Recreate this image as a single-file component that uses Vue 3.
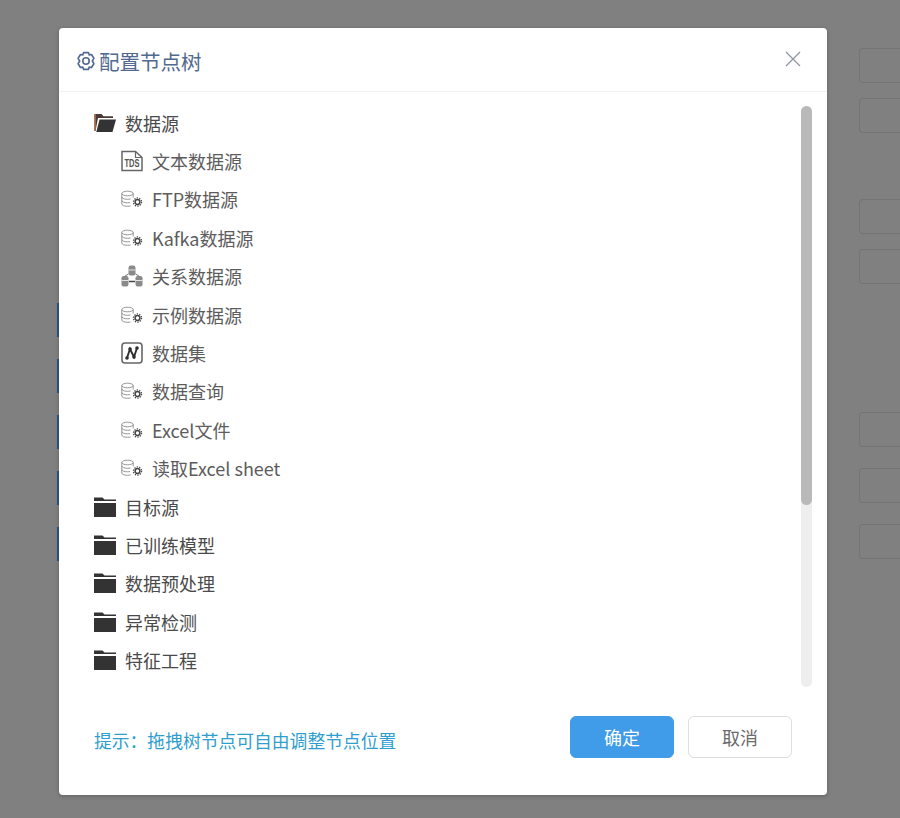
<template>
  <div class="page">
    <!-- page behind the mask -->
    <div class="behind">
      <div class="left-marks">
        <span v-for="n in 5" :key="n" class="mark"></span>
      </div>
      <div class="right-boxes">
        <div class="box-group first">
          <span class="box"></span>
          <span class="box"></span>
        </div>
        <div class="box-group second">
          <span class="box"></span>
          <span class="box"></span>
        </div>
        <div class="box-group third">
          <span class="box"></span>
          <span class="box"></span>
          <span class="box"></span>
        </div>
      </div>
    </div>

    <div class="mask">
      <div class="dialog">
        <div class="dialog-header">
          <div class="title">
            <svg class="gear" viewBox="0 0 20 20" fill="none" stroke="#51698f" stroke-width="1.6" stroke-linejoin="round">
              <path d="M7.600 1.600h4.800l.8 2.300 2.300-.4 2.400 3.800-1.600 2.700 1.600 2.700-2.400 3.800-2.300-.4-.8 2.300H7.600l-.8-2.300-2.300.4-2.400-3.800 1.600-2.700-1.600-2.700 2.400-3.800 2.300.4z" />
              <circle cx="10" cy="10" r="3.200" />
            </svg>
            <span>配置节点树</span>
          </div>
          <svg class="close" viewBox="0 0 16 16" fill="none" stroke="#8f96a0" stroke-width="1.3">
            <path d="M1 1l14 14M15 1L1 15" />
          </svg>
        </div>

        <div class="dialog-body">
          <div class="tree">
            <div
              v-for="node in nodes"
              :key="node.label"
              class="row"
              :class="{ child: node.child }"
            >
              <svg v-if="node.icon === 'open'" class="icon" viewBox="0 0 22 20">
                <path d="M0.500 1h7l2 2.200H19v1.800H4L1.500 18H0.500z" fill="#4a3a36" />
                <path d="M0.500 1h1.500v16l-1.500 1z" fill="#a0623c" />
                <path d="M5.500 6.500H22L18.500 19H2.300z" fill="#333" />
              </svg>
              <svg v-else-if="node.icon === 'folder'" class="icon" viewBox="0 0 22 20">
                <path d="M0 0.500h8.500l2 2H22v1.600H0z" fill="#333" />
                <path d="M0 6h22v14H0z" fill="#333" />
              </svg>
              <svg v-else-if="node.icon === 'doc'" class="icon" viewBox="0 0 22 22" fill="none" stroke="#666">
                <path d="M1 1.500h13.500l6.500 6v13H1z" stroke-width="1.500" />
                <path d="M14.500 1.500V7.500h6.500" stroke-width="1.200" />
                <text x="3.500" y="16.800" textLength="15" lengthAdjust="spacingAndGlyphs" class="doc-text">TDS</text>
              </svg>
              <svg v-else-if="node.icon === 'db'" class="icon" viewBox="0 0 22 20" fill="none">
                <g stroke="#8a8a8a" stroke-width="0.900">
                  <ellipse cx="6.500" cy="4.500" rx="5.700" ry="2.300" />
                  <path d="M0.800 4.500v10.500c0 1.300 2.500 2.300 5.700 2.300 1.200 0 2.200-.1 3-.4M12.200 4.500v4M0.800 8c0 1.300 2.500 2.300 5.700 2.300 1 0 2-.1 3-.4M0.800 11.500c0 1.300 2.500 2.300 5.700 2.300 1 0 1.800-.1 2.500-.3" />
                </g>
                <circle cx="16.500" cy="13" r="2.400" stroke="#444" stroke-width="1.500" />
                <circle cx="16.500" cy="13" r="4.100" stroke="#444" stroke-width="1.200" stroke-dasharray="1.300 1.270" />
              </svg>
              <svg v-else-if="node.icon === 'relation'" class="icon" viewBox="0 0 22 22" fill="none">
                <rect x="7.500" y="0.500" width="7" height="10" rx="2.200" fill="#8a8a8a" />
                <rect x="0.500" y="11" width="7" height="10.500" rx="2.200" fill="#8a8a8a" />
                <rect x="14.500" y="11" width="7" height="10.500" rx="2.200" fill="#8a8a8a" />
                <path d="M7.500 5h7M0.500 15.500h7M14.500 15.500h7" stroke="#e4e4e4" stroke-width="1.200" />
                <path d="M7.500 9L4 11M14.500 9L18 11" stroke="#777" stroke-width="1" />
                <path d="M8 16.500h6" stroke="#444" stroke-width="1.500" />
              </svg>
              <svg v-else class="icon" viewBox="0 0 22 22" fill="none">
                <rect x="1" y="1" width="20" height="20" rx="3" stroke="#666" stroke-width="1.600" />
                <path d="M6 16l3-9 4 8 3-9" stroke="#2e2e2e" stroke-width="1.900" />
                <circle cx="6" cy="16" r="1.800" fill="#2e2e2e" />
                <circle cx="9" cy="7" r="1.800" fill="#2e2e2e" />
                <circle cx="13" cy="15" r="1.800" fill="#2e2e2e" />
                <circle cx="16" cy="6" r="1.800" fill="#2e2e2e" />
              </svg>
              <span class="label">{{ node.label }}</span>
            </div>
          </div>
          <div class="scroll-track">
            <div class="scroll-thumb"></div>
          </div>
        </div>

        <div class="dialog-footer">
          <span class="hint">提示：拖拽树节点可自由调整节点位置</span>
          <div class="buttons">
            <button type="button" class="btn primary">确定</button>
            <button type="button" class="btn">取消</button>
          </div>
        </div>
      </div>
    </div>
  </div>
</template>

<script setup>
const nodes = [
  { label: "数据源", icon: "open" },
  { label: "文本数据源", icon: "doc", child: true },
  { label: "FTP数据源", icon: "db", child: true },
  { label: "Kafka数据源", icon: "db", child: true },
  { label: "关系数据源", icon: "relation", child: true },
  { label: "示例数据源", icon: "db", child: true },
  { label: "数据集", icon: "dataset", child: true },
  { label: "数据查询", icon: "db", child: true },
  { label: "Excel文件", icon: "db", child: true },
  { label: "读取Excel sheet", icon: "db", child: true },
  { label: "目标源", icon: "folder" },
  { label: "已训练模型", icon: "folder" },
  { label: "数据预处理", icon: "folder" },
  { label: "异常检测", icon: "folder" },
  { label: "特征工程", icon: "folder" },
];
</script>

<style scoped>
.page {
  position: relative;
  width: 900px;
  height: 818px;
  overflow: hidden;
  background: #808080;
  font-family: "Noto Sans CJK SC", "Open Sans", sans-serif;
}

.behind {
  display: flex;
  justify-content: space-between;
  height: 100%;
  padding-left: 57px;
  box-sizing: border-box;
}

.left-marks {
  display: flex;
  flex-direction: column;
  gap: 22px;
  padding-top: 303px;
}

.mark {
  display: block;
  width: 2px;
  height: 34px;
  background: #27598a;
}

.right-boxes {
  display: flex;
  flex-direction: column;
  width: 41px;
  padding-top: 48px;
}

.box-group {
  display: flex;
  flex-direction: column;
  gap: 15px;
}

.second {
  margin-top: 66px;
}

.third {
  margin-top: 128px;
  gap: 21px;
}

.box {
  display: block;
  box-sizing: border-box;
  height: 35px;
  border: 1px solid #747474;
  border-right: none;
  border-radius: 4px 0 0 4px;
}

.mask {
  position: absolute;
  inset: 0;
  display: flex;
  justify-content: center;
}

.dialog {
  display: flex;
  flex-direction: column;
  width: 768px;
  height: 767px;
  margin-top: 28px;
  margin-right: 14px;
  background: #fff;
  border-radius: 4px;
  box-shadow: 0 1px 4px rgba(0, 0, 0, 0.25);
}

.dialog-header {
  display: flex;
  align-items: center;
  justify-content: space-between;
  height: 63px;
  padding: 0 26px 0 17px;
  border-bottom: 1px solid #f2f2f2;
}

.title {
  display: flex;
  align-items: center;
  gap: 3px;
  margin-top: 2px;
  font-size: 20.5px;
  color: #51698f;
}

.gear {
  width: 20px;
  height: 20px;
}

.close {
  width: 16px;
  height: 16px;
  margin-top: -2px;
}

.dialog-body {
  display: flex;
  height: 596px;
}

.tree {
  flex: 1;
  padding: 11.5px 0 0 35px;
  overflow: hidden;
}

.row {
  display: flex;
  align-items: center;
  gap: 9px;
  height: 38.4px;
  font-size: 18px;
  color: #4a4a4a;
}

.row.child {
  padding-left: 27px;
  color: #5c5c5c;
}

.icon {
  flex: none;
  width: 22px;
  height: 22px;
}

.doc-text {
  font-family: "Liberation Sans", sans-serif;
  font-size: 10px;
  font-weight: 700;
  fill: #555;
  stroke: none;
}

.scroll-track {
  flex: none;
  width: 11px;
  height: 581px;
  margin: 14px 15px 0 0;
  background: #eeeeee;
  border-radius: 6px;
}

.scroll-thumb {
  height: 399px;
  background: #b9b9b9;
  border-radius: 6px;
}

.dialog-footer {
  display: flex;
  align-items: center;
  justify-content: space-between;
  padding: 28px 35px 0;
}

.hint {
  margin-top: 6px;
  font-size: 17.8px;
  color: #2f9ecf;
}

.buttons {
  display: flex;
  gap: 14px;
}

.btn {
  width: 104px;
  height: 42px;
  padding: 0;
  font-family: inherit;
  font-size: 18px;
  color: #6b6b6b;
  background: #fff;
  border: 1px solid #dedede;
  border-radius: 6px;
}

.btn.primary {
  color: #fff;
  background: #409be9;
  border-color: #409be9;
}
</style>

<style>
html,
body {
  margin: 0;
  background: #808080;
}
</style>
